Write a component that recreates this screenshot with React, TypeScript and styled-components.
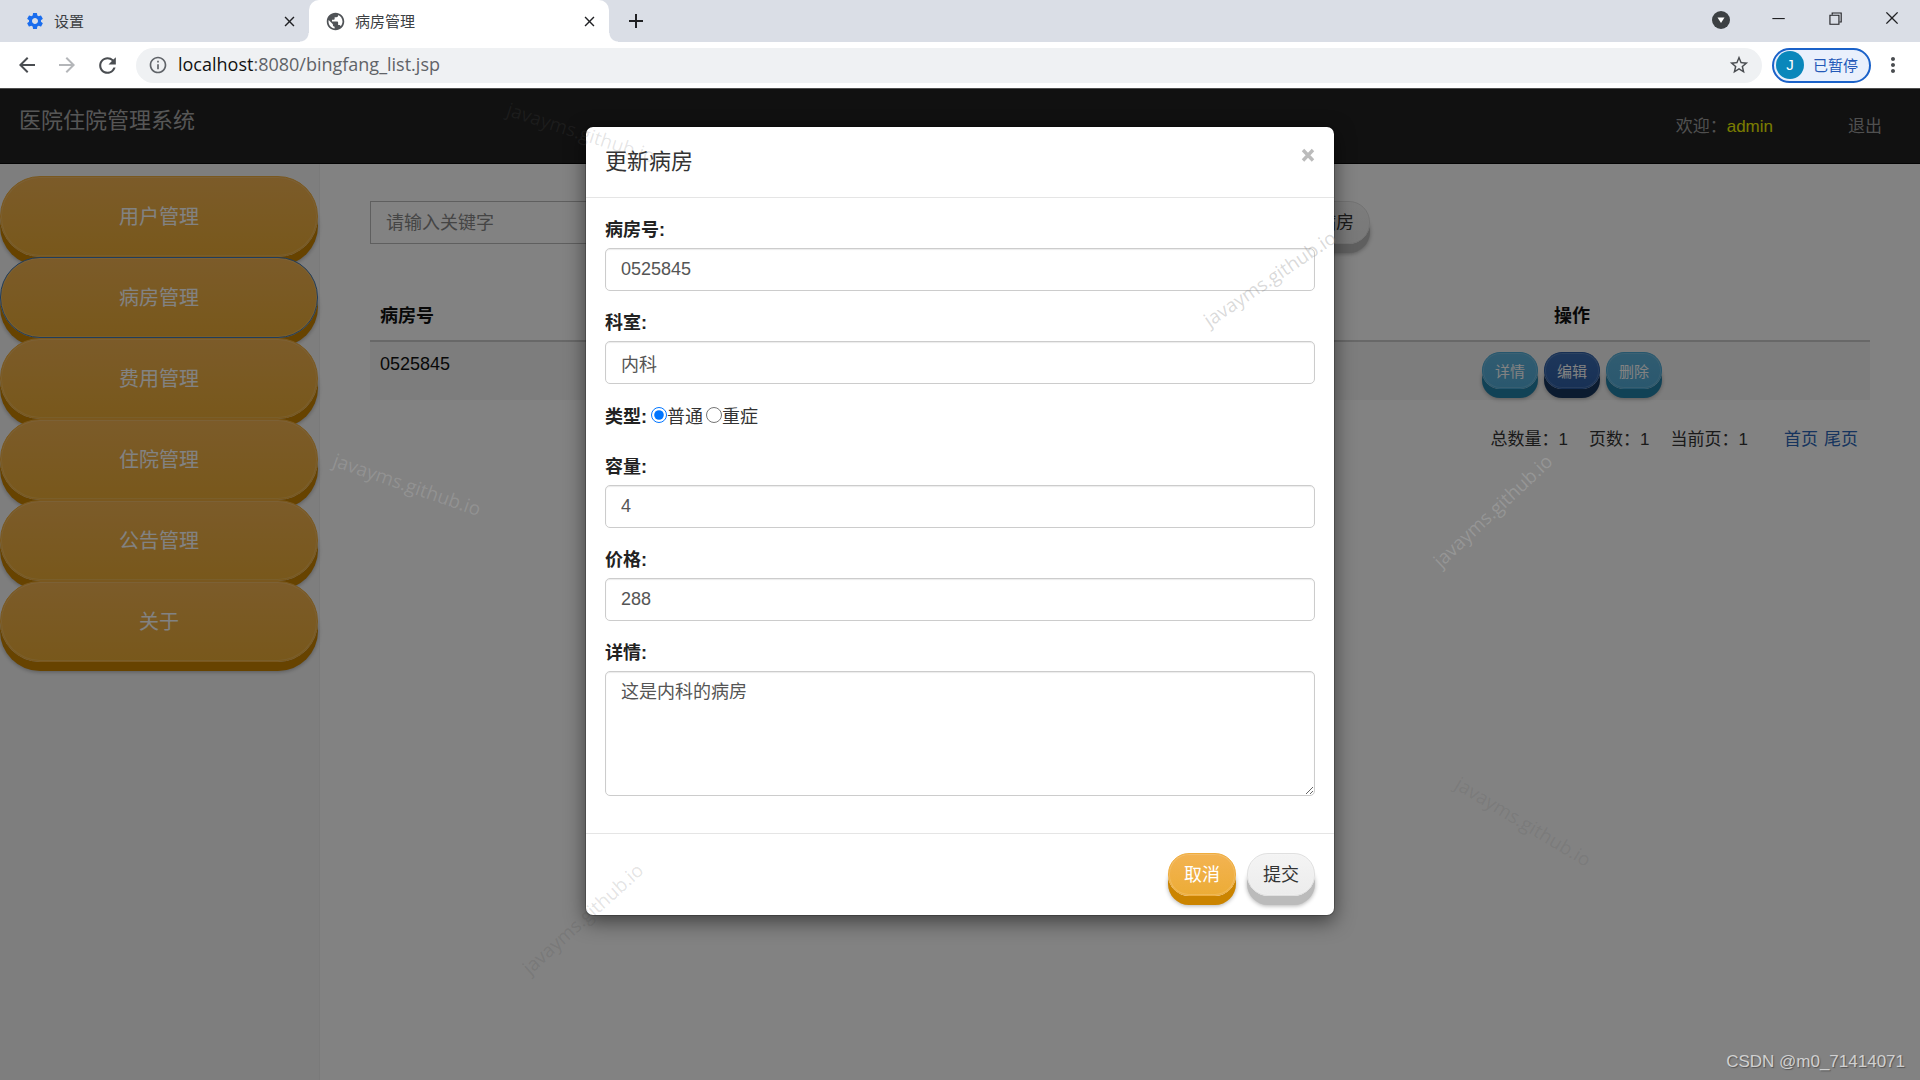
import React from "react";
import styled, { createGlobalStyle, css } from "styled-components";
import {
  MdArrowBack,
  MdArrowForward,
  MdClose,
  MdInfoOutline,
  MdMoreVert,
  MdPublic,
  MdRefresh,
  MdSettings,
  MdStarBorder,
  MdAdd,
} from "react-icons/md";
import { VscChromeClose, VscChromeMinimize, VscChromeRestore } from "react-icons/vsc";

const pageFont = `"Liberation Sans", "Noto Sans CJK SC", sans-serif`;
const chromeFont = `"Open Sans", "Noto Sans CJK SC", sans-serif`;

const GlobalStyle = createGlobalStyle`
  *, *::before, *::after { box-sizing: border-box; }
  body { margin: 0; font-family: ${pageFont}; font-size: 18px; line-height: 25px; color: #333; background: #fff; }
  button, input, textarea { font: inherit; color: inherit; margin: 0; }
  button { cursor: pointer; }
  svg { display: block; flex: none; }
`;

const Frame = styled.div`
  min-height: 100vh;
  display: flex;
  flex-direction: column;
  position: relative;
  overflow: hidden;
`;

/* ---------- browser chrome ---------- */

const TabStrip = styled.div`
  display: flex;
  align-items: stretch;
  height: 42px;
  padding-left: 9px;
  background: #dadee6;
  font-family: ${chromeFont};
  font-size: 15px;
  line-height: 20px;
`;

const Tab = styled.div<{ $active?: boolean }>`
  position: relative;
  display: flex;
  align-items: center;
  gap: 9px;
  width: 300px;
  padding: 0 11px 0 16px;
  color: #3c4043;
  ${(p) =>
    p.$active &&
    css`
      background: #fff;
      border-radius: 10px 10px 0 0;
      &::before,
      &::after {
        content: "";
        position: absolute;
        bottom: 0;
        width: 9px;
        height: 9px;
      }
      &::before {
        right: 100%;
        background: radial-gradient(circle at 0 0, transparent 8px, #fff 9px);
      }
      &::after {
        left: 100%;
        background: radial-gradient(circle at 100% 0, transparent 8px, #fff 9px);
      }
    `}
`;

const TabTitle = styled.span`
  flex: 1;
`;

const IconButton = styled.button<{ $color?: string }>`
  display: flex;
  align-items: center;
  justify-content: center;
  padding: 0;
  border: 0;
  background: none;
  color: ${(p) => p.$color ?? "#202124"};
`;

const NewTab = styled(IconButton)`
  width: 54px;
`;

const WindowControls = styled.div`
  display: flex;
  align-items: center;
  margin-left: auto;
  height: 36px;
`;

const WindowButton = styled(IconButton)`
  width: 57px;
  height: 36px;
`;

const TabSearchButton = styled(WindowButton)`
  align-self: flex-end;
  height: 32px;
`;

const Toolbar = styled.div`
  display: flex;
  align-items: center;
  height: 46px;
  padding: 0 15px;
  background: #fff;
  font-family: ${chromeFont};
`;

const NavButtons = styled.div`
  display: flex;
  gap: 16px;
  margin-right: 16px;
`;

const AddressBar = styled.div`
  flex: 1;
  display: flex;
  align-items: center;
  height: 35px;
  padding: 0 12px;
  gap: 10px;
  border-radius: 18px;
  background: #eff1f3;
  font-size: 18px;
  color: #5f6368;
`;

const Url = styled.div`
  flex: 1;
  padding-bottom: 2px;
  b {
    font-weight: 400;
    color: #111;
  }
`;

const ProfilePill = styled.button`
  display: flex;
  align-items: center;
  gap: 9px;
  height: 35px;
  margin: 0 10px;
  padding: 0 11px 0 2px;
  border: 2px solid #1b62c9;
  border-radius: 18px;
  background: #e9f0fc;
  color: #2459b8;
  font-size: 15px;
`;

const Avatar = styled.span`
  width: 28px;
  height: 28px;
  border-radius: 50%;
  background: #0a87bb;
  color: #fff;
  font-family: ${pageFont};
  font-size: 15px;
  line-height: 28px;
  text-align: center;
`;

/* ---------- application page ---------- */

const Page = styled.div`
  flex: 1;
  position: relative;
  display: flex;
  flex-direction: column;
  background: #fff;
`;

const NavBar = styled.header`
  display: flex;
  justify-content: space-between;
  height: 76px;
  padding: 19px 38px 0 19px;
  background: #222;
  border-top: 1px solid #999;
  border-bottom: 1px solid #080808;
  color: #9d9d9d;
`;

const Brand = styled.a`
  font-size: 22px;
  color: #aaa;
  text-decoration: none;
`;

const UserBox = styled.div`
  display: flex;
  padding-top: 6px;
  font-size: 17px;
`;

const UserName = styled.span`
  color: #eef400;
`;

const LogoutLink = styled.a`
  margin-left: 75px;
  color: inherit;
  text-decoration: none;
`;

const Columns = styled.div`
  flex: 1;
  display: flex;
`;

const Sidebar = styled.nav`
  display: flex;
  flex-direction: column;
  width: 320px;
  padding: 12px 1px 0 0;
  background: #f8f8f8;
  border-right: 1px solid #f0f0f0;
`;

const tones = {
  orange: { top: "#f3b352", bottom: "#ecac36", edge: "#cb8400", rim: "#efad3e", text: "#fff" },
  gray: { top: "#f4f4f4", bottom: "#ececec", edge: "#bbb", rim: "#e0e0e0", text: "#333" },
  cyan: { top: "#5fb4dd", bottom: "#53acd8", edge: "#2381a9", rim: "#4caad6", text: "#fff" },
  navy: { top: "#3a6cb2", bottom: "#2f60a8", edge: "#17365f", rim: "#2b5ca4", text: "#fff" },
};

const sizes = {
  menu: css`
    height: 81px;
    font-size: 20px;
    border-radius: 40px;
  `,
  normal: css`
    height: 43px;
    font-size: 18px;
    border-radius: 21px;
  `,
  small: css`
    height: 37px;
    font-size: 15px;
    border-radius: 18px;
  `,
};

const RaisedButton = styled.button<{
  $tone: keyof typeof tones;
  $size: keyof typeof sizes;
  $focused?: boolean;
}>`
  flex: none;
  padding: 1px ${(p) => (p.$size === "small" ? 12 : 15)}px 0;
  white-space: nowrap;
  border: 1px solid ${(p) => (p.$focused ? "#4078b4" : tones[p.$tone].rim)};
  background: linear-gradient(${(p) => tones[p.$tone].top}, ${(p) => tones[p.$tone].bottom});
  color: ${(p) => tones[p.$tone].text};
  box-shadow: inset 0 0 0 1px rgba(255, 255, 255, 0.15), 0 9px 0 ${(p) => tones[p.$tone].edge},
    0 10px 4px rgba(0, 0, 0, 0.3);
  ${(p) => sizes[p.$size]}
`;

const Content = styled.main`
  flex: 1;
  padding: 37px 50px;
`;

const SearchRow = styled.form`
  display: flex;
  gap: 12px;
  width: calc(100% * 2 / 3);
`;

const SearchInput = styled.input`
  flex: 1;
  height: 43px;
  padding: 1px 15px 0;
  border: 1px solid #bbb;
  background: transparent;
  &::placeholder {
    color: #888;
    opacity: 1;
  }
`;

const RoomTable = styled.table`
  width: 100%;
  margin-top: 49px;
  border-collapse: collapse;
  color: #111;
  th,
  td {
    padding: 10px 10px 11px;
    text-align: left;
    vertical-align: top;
  }
  th {
    padding-top: 11px;
    border-bottom: 2px solid #ccc;
  }
  td {
    background: #f6f6f6;
  }
  th:last-child {
    width: 40%;
    text-align: center;
  }
  th:last-child,
  td:last-child {
    padding-left: 14px;
  }
`;

const RowActions = styled.div`
  display: flex;
  justify-content: center;
  gap: 6px;
`;

const Pager = styled.div`
  display: flex;
  justify-content: flex-end;
  gap: 21px;
  padding: 27px 12px 0;
  font-size: 17px;
`;

const PagerLinks = styled.span`
  display: flex;
  gap: 6px;
  margin-left: 15px;
  a {
    color: #2c67b8;
    text-decoration: none;
  }
`;

/* ---------- dialog ---------- */

const Backdrop = styled.div`
  position: absolute;
  inset: 0;
  display: flex;
  justify-content: center;
  align-items: flex-start;
  padding-top: 38px;
  background: rgba(0, 0, 0, 0.49);
`;

const Dialog = styled.form`
  width: 750px;
  border: 1px solid rgba(0, 0, 0, 0.2);
  border-radius: 8px;
  background: #fff;
  background-clip: padding-box;
  box-shadow: 0 6px 19px rgba(0, 0, 0, 0.5);
`;

const DialogHeader = styled.div`
  display: flex;
  justify-content: space-between;
  align-items: flex-start;
  height: 71px;
  padding: 17px 19px 0;
  border-bottom: 1px solid #e5e5e5;
`;

const DialogTitle = styled.h4`
  margin: 0;
  font-size: 22px;
  line-height: 36px;
  font-weight: 400;
`;

const DialogBody = styled.div`
  padding: 19px 19px 18px;
`;

const Field = styled.div`
  margin-bottom: 19px;
`;

const FieldLabel = styled.label`
  display: block;
  padding-top: 1px;
  margin-bottom: 5px;
  font-weight: 700;
  color: #222;
`;

const controlStyle = css`
  display: block;
  width: 100%;
  padding: 8px 15px;
  border: 1px solid #ccc;
  border-radius: 5px;
  background: #fff;
  color: #555;
  box-shadow: inset 0 1px 1px rgba(0, 0, 0, 0.08);
`;

const TextInput = styled.input`
  ${controlStyle}
  height: 43px;
`;

const TextArea = styled.textarea`
  ${controlStyle}
  height: 125px;
  resize: vertical;
`;

const RadioField = styled.fieldset`
  display: flex;
  align-items: flex-start;
  height: 32px;
  margin: 0 0 19px;
  padding: 0;
  border: 0;
  line-height: 29px;
`;

const RadioLegend = styled.span`
  margin-right: 4px;
  font-weight: 700;
  color: #222;
`;

const RadioLabel = styled.label`
  display: flex;
  align-items: flex-start;
  margin-right: 3px;
  input {
    width: 16px;
    height: 16px;
    margin: 4px 0 0;
  }
`;

const DialogFooter = styled.div`
  display: flex;
  justify-content: flex-end;
  gap: 11px;
  height: 82px;
  padding: 19px;
  border-top: 1px solid #e5e5e5;
`;

/* ---------- stamped marks over the page ---------- */

const Stamp = styled.span<{ $x: number; $y: number; $angle: number; $color: string }>`
  position: absolute;
  left: ${(p) => p.$x}px;
  top: ${(p) => p.$y}px;
  transform: translate(-50%, -50%) rotate(${(p) => p.$angle}deg);
  font-family: "Open Sans", sans-serif;
  font-size: 19px;
  white-space: nowrap;
  color: ${(p) => p.$color};
  pointer-events: none;
`;

const Credit = styled.span`
  position: absolute;
  right: 15px;
  bottom: 6px;
  font-size: 17px;
  color: #d0d0d0;
  text-shadow: 1px 1px 1px #555;
  pointer-events: none;
`;

const menuItems = ["用户管理", "病房管理", "费用管理", "住院管理", "公告管理", "关于"];

const stamps = [
  { x: 581, y: 133, angle: 18, color: "rgba(90, 90, 90, 0.16)" },
  { x: 407, y: 485, angle: 19, color: "rgba(255, 255, 255, 0.14)" },
  { x: 1270, y: 279, angle: -34, color: "rgba(140, 140, 140, 0.32)" },
  { x: 1493, y: 511, angle: -43, color: "rgba(255, 255, 255, 0.17)" },
  { x: 583, y: 919, angle: -42, color: "rgba(60, 60, 60, 0.15)" },
  { x: 1523, y: 822, angle: 31, color: "rgba(60, 60, 60, 0.11)" },
];

function TabSearchIcon() {
  return (
    <svg width="18" height="18" viewBox="0 0 18 18">
      <circle cx="9" cy="9" r="9" fill="#3c4043" />
      <path d="M5.500 6.500h7l-3.500 5.500z" fill="#fff" />
    </svg>
  );
}

function BrowserChrome() {
  return (
    <>
      <TabStrip>
        <Tab>
          <MdSettings size={20} color="#1a6dee" />
          <TabTitle>设置</TabTitle>
          <IconButton aria-label="关闭标签页">
            <MdClose size={17} />
          </IconButton>
        </Tab>
        <Tab $active>
          <MdPublic size={21} color="#505357" />
          <TabTitle>病房管理</TabTitle>
          <IconButton aria-label="关闭标签页">
            <MdClose size={17} />
          </IconButton>
        </Tab>
        <NewTab aria-label="新标签页">
          <MdAdd size={24} />
        </NewTab>
        <WindowControls>
          <TabSearchButton aria-label="搜索标签页">
            <TabSearchIcon />
          </TabSearchButton>
          <WindowButton aria-label="最小化">
            <VscChromeMinimize size={18} />
          </WindowButton>
          <WindowButton aria-label="还原">
            <VscChromeRestore size={18} />
          </WindowButton>
          <WindowButton aria-label="关闭">
            <VscChromeClose size={18} />
          </WindowButton>
        </WindowControls>
      </TabStrip>
      <Toolbar>
        <NavButtons>
          <IconButton aria-label="后退" $color="#4a4d51">
            <MdArrowBack size={24} />
          </IconButton>
          <IconButton aria-label="前进" $color="#b4b6b9">
            <MdArrowForward size={24} />
          </IconButton>
          <IconButton aria-label="刷新" $color="#4a4d51">
            <MdRefresh size={25} />
          </IconButton>
        </NavButtons>
        <AddressBar>
          <MdInfoOutline size={20} />
          <Url>
            <b>localhost</b>:8080/bingfang_list.jsp
          </Url>
          <IconButton aria-label="收藏" $color="#4a4d51">
            <MdStarBorder size={22} />
          </IconButton>
        </AddressBar>
        <ProfilePill>
          <Avatar>J</Avatar>
          已暂停
        </ProfilePill>
        <IconButton aria-label="菜单" $color="#4a4d51">
          <MdMoreVert size={24} />
        </IconButton>
      </Toolbar>
    </>
  );
}

function TextField({ id, label, value }: { id: string; label: string; value: string }) {
  return (
    <Field>
      <FieldLabel htmlFor={id}>{label}</FieldLabel>
      <TextInput id={id} defaultValue={value} />
    </Field>
  );
}

function RoomDialog() {
  return (
    <Backdrop>
      <Dialog role="dialog" aria-labelledby="dialog-title">
        <DialogHeader>
          <DialogTitle id="dialog-title">更新病房</DialogTitle>
          <IconButton type="button" aria-label="关闭" $color="#bbb">
            <svg width="14" height="24" viewBox="0 0 14 24">
              <path d="M2 6l10 10.500M12 6l-10 10.500" stroke="currentColor" strokeWidth="3.400" />
            </svg>
          </IconButton>
        </DialogHeader>
        <DialogBody>
          <TextField id="room-no" label="病房号:" value="0525845" />
          <TextField id="room-dept" label="科室:" value="内科" />
          <RadioField>
            <RadioLegend>类型:</RadioLegend>
            <RadioLabel>
              <input type="radio" name="kind" defaultChecked />
              普通
            </RadioLabel>
            <RadioLabel>
              <input type="radio" name="kind" />
              重症
            </RadioLabel>
          </RadioField>
          <TextField id="room-size" label="容量:" value="4" />
          <TextField id="room-price" label="价格:" value="288" />
          <Field>
            <FieldLabel htmlFor="room-info">详情:</FieldLabel>
            <TextArea id="room-info" defaultValue="这是内科的病房" />
          </Field>
        </DialogBody>
        <DialogFooter>
          <RaisedButton type="button" $tone="orange" $size="normal">
            取消
          </RaisedButton>
          <RaisedButton type="button" $tone="gray" $size="normal">
            提交
          </RaisedButton>
        </DialogFooter>
      </Dialog>
    </Backdrop>
  );
}

export default function App() {
  return (
    <Frame>
      <GlobalStyle />
      <BrowserChrome />
      <Page>
        <NavBar>
          <Brand href="#">医院住院管理系统</Brand>
          <UserBox>
            <span>欢迎：</span>
            <UserName>admin</UserName>
            <LogoutLink href="#">退出</LogoutLink>
          </UserBox>
        </NavBar>
        <Columns>
          <Sidebar>
            {menuItems.map((item, i) => (
              <RaisedButton key={item} $tone="orange" $size="menu" $focused={i === 1}>
                {item}
              </RaisedButton>
            ))}
          </Sidebar>
          <Content>
            <SearchRow>
              <SearchInput placeholder="请输入关键字" aria-label="关键字" />
              <RaisedButton type="button" $tone="gray" $size="normal">
                新增病房
              </RaisedButton>
            </SearchRow>
            <RoomTable>
              <thead>
                <tr>
                  <th>病房号</th>
                  <th>操作</th>
                </tr>
              </thead>
              <tbody>
                <tr>
                  <td>0525845</td>
                  <td>
                    <RowActions>
                      <RaisedButton $tone="cyan" $size="small">
                        详情
                      </RaisedButton>
                      <RaisedButton $tone="navy" $size="small">
                        编辑
                      </RaisedButton>
                      <RaisedButton $tone="cyan" $size="small">
                        删除
                      </RaisedButton>
                    </RowActions>
                  </td>
                </tr>
              </tbody>
            </RoomTable>
            <Pager>
              <span>总数量：1</span>
              <span>页数：1</span>
              <span>当前页：1</span>
              <PagerLinks>
                <a href="#">首页</a>
                <a href="#">尾页</a>
              </PagerLinks>
            </Pager>
          </Content>
        </Columns>
        <RoomDialog />
      </Page>
      {stamps.map((s) => (
        <Stamp key={`${s.x}-${s.y}`} $x={s.x} $y={s.y} $angle={s.angle} $color={s.color}>
          javayms.github.io
        </Stamp>
      ))}
      <Credit>CSDN @m0_71414071</Credit>
    </Frame>
  );
}
